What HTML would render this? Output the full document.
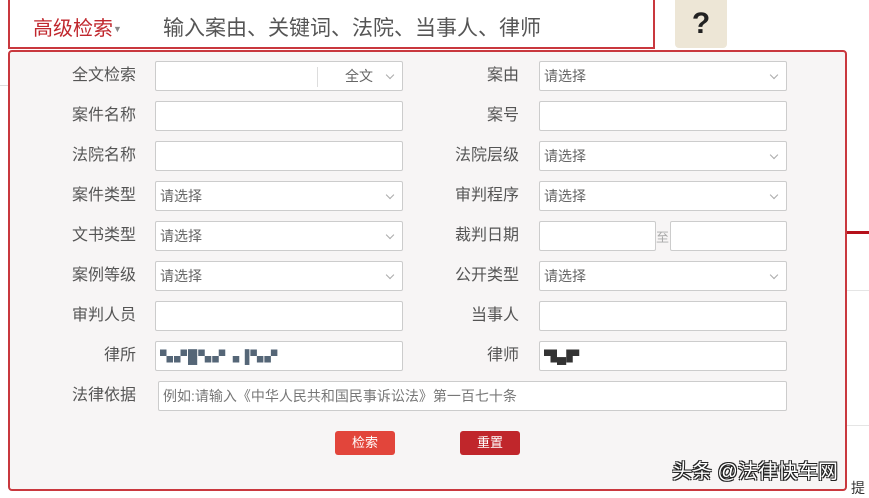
<!DOCTYPE html><html><head><meta charset="utf-8"><style>
*{box-sizing:border-box;margin:0;padding:0}
body{width:869px;height:493px;overflow:hidden;background:#fff;position:relative;font-family:"Liberation Sans","Noto Sans CJK SC",sans-serif}
.a{position:absolute}
.top{left:8px;top:0;width:647px;height:49px;border:2px solid #c9383e;border-top:none;background:#fff}
.lbl{position:absolute;font-size:16px;color:#555;text-align:right;width:91px;line-height:30px}
.in{position:absolute;height:30px;background:#fff;border:1px solid #ccc;border-radius:2px;font-size:14px;color:#666;line-height:28px;padding-left:4px}
.sel::after{content:"";position:absolute;right:9px;top:10px;width:5px;height:5px;border-right:1px solid #aaa;border-bottom:1px solid #aaa;transform:rotate(45deg)}
.btn{position:absolute;top:431px;width:60px;height:24px;border-radius:3px;color:#fff;font-size:13px;text-align:center;line-height:24px}
</style></head><body>
<div class="a" style="left:0;top:85px;width:10px;height:1px;background:#ddd"></div>
<div class="a" style="left:846px;top:231px;width:23px;height:3px;background:#b5101a"></div>
<div class="a" style="left:846px;top:290px;width:23px;height:1px;background:#e5e5e5"></div>
<div class="a" style="left:846px;top:425px;width:23px;height:1px;background:#e5e5e5"></div>
<div class="a top"></div>
<div class="a" style="left:33px;top:12px;font-size:20px;color:#c0272d">高级检索<span style="font-size:9px;color:#888;vertical-align:3px">▼</span></div>
<div class="a" style="left:163px;top:12px;font-size:21px;color:#555">输入案由、关键词、法院、当事人、律师</div>
<div class="a" style="left:675px;top:0;width:52px;height:48px;background:#ede6d6;border-radius:0 0 4px 4px;text-align:center;font-size:30px;font-weight:bold;color:#222;line-height:48px">?</div>
<div class="a" style="left:8px;top:50px;width:839px;height:441px;border:2px solid #c9383e;border-radius:4px;background:#f7f5f5"></div>

<div class="lbl" style="left:45px;top:61px">全文检索</div>
<div class="in" style="left:155px;top:61px;width:248px"><div class="a" style="left:161px;top:5px;width:1px;height:20px;background:#ddd"></div><span class="a" style="left:189px;top:0">全文</span><div class="sel"></div></div>
<div class="lbl" style="left:428px;top:61px">案由</div>
<div class="in sel" style="left:539px;top:61px;width:248px">请选择</div>

<div class="lbl" style="left:45px;top:101px">案件名称</div>
<div class="in" style="left:155px;top:101px;width:248px"></div>
<div class="lbl" style="left:428px;top:101px">案号</div>
<div class="in" style="left:539px;top:101px;width:248px"></div>

<div class="lbl" style="left:45px;top:141px">法院名称</div>
<div class="in" style="left:155px;top:141px;width:248px"></div>
<div class="lbl" style="left:428px;top:141px">法院层级</div>
<div class="in sel" style="left:539px;top:141px;width:248px">请选择</div>

<div class="lbl" style="left:45px;top:181px">案件类型</div>
<div class="in sel" style="left:155px;top:181px;width:248px">请选择</div>
<div class="lbl" style="left:428px;top:181px">审判程序</div>
<div class="in sel" style="left:539px;top:181px;width:248px">请选择</div>

<div class="lbl" style="left:45px;top:221px">文书类型</div>
<div class="in sel" style="left:155px;top:221px;width:248px">请选择</div>
<div class="lbl" style="left:428px;top:221px">裁判日期</div>
<div class="in" style="left:539px;top:221px;width:117px"></div>
<div class="a" style="left:656px;top:227px;font-size:13px;color:#aaa">至</div>
<div class="in" style="left:670px;top:221px;width:117px"></div>

<div class="lbl" style="left:45px;top:261px">案例等级</div>
<div class="in sel" style="left:155px;top:261px;width:248px">请选择</div>
<div class="lbl" style="left:428px;top:261px">公开类型</div>
<div class="in sel" style="left:539px;top:261px;width:248px">请选择</div>

<div class="lbl" style="left:45px;top:301px">审判人员</div>
<div class="in" style="left:155px;top:301px;width:248px"></div>
<div class="lbl" style="left:428px;top:301px">当事人</div>
<div class="in" style="left:539px;top:301px;width:248px"></div>

<div class="lbl" style="left:45px;top:341px">律所</div>
<div class="in" style="left:155px;top:341px;width:248px"><span style="color:#567;letter-spacing:1px;font-size:13px">▚▞█▚▞▗▐▚▞</span></div>
<div class="lbl" style="left:428px;top:341px">律师</div>
<div class="in" style="left:539px;top:341px;width:248px"><span style="color:#333;font-size:13px">▜▄▛</span></div>

<div class="lbl" style="left:45px;top:381px">法律依据</div>
<div class="in" style="left:158px;top:381px;width:629px;color:#777">例如:请输入《中华人民共和国民事诉讼法》第一百七十条</div>

<div class="btn" style="left:335px;background:#e2453b">检索</div>
<div class="btn" style="left:460px;background:#c0262b">重置</div>

<div class="a" style="left:672px;top:455px;font-size:20px;color:#fff;text-shadow:1px 1px 0 #222,-1px -1px 0 #222,1px -1px 0 #222,-1px 1px 0 #222">头条 @法律快车网</div>
<div class="a" style="left:851px;top:478px;font-size:14px;color:#333">提</div>
</body></html>
